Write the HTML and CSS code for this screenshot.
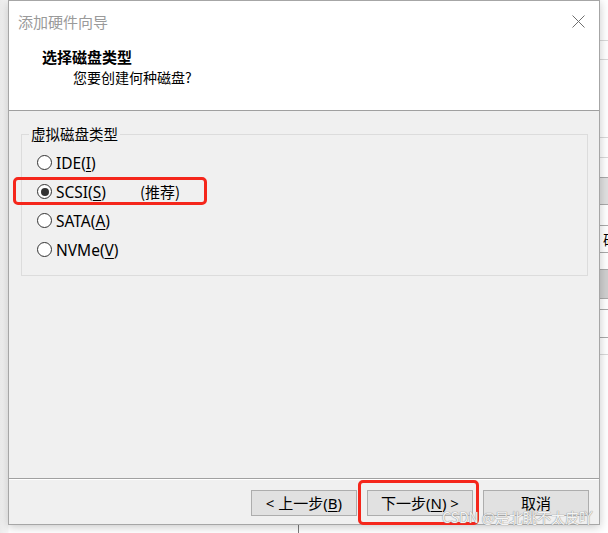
FILE: index.html
```html
<!DOCTYPE html>
<html lang="zh-CN">
<head>
<meta charset="utf-8">
<title>添加硬件向导</title>
<link rel="stylesheet" href="styles.css">
</head>
<body>
<div class="desk">
  <div class="bgwin">
    <div class="bl l1"></div>
    <div class="bl l2"></div>
    <div class="bl l3"></div>
    <div class="bl l4"></div>
    <div class="bb b1"></div>
    <div class="bl l5"></div>
    <div class="bchar">砳</div>
    <div class="bl l6"></div>
    <div class="bb b2"></div>
    <div class="bl l7"></div>
    <div class="bl l8"></div>
    <div class="bl l9"></div>
  </div>
  <div class="vline-top"></div>
  <div class="vline-bottom"></div>

  <div class="dialog">
    <div class="header">
      <div class="titlebar">
        <span class="title">添加硬件向导</span>
        <svg class="close" width="13" height="13" viewBox="0 0 13 13"><path d="M0.5 0.5L12.5 12.5M12.5 0.5L0.5 12.5" stroke="#6e6e6e" stroke-width="1" fill="none"/></svg>
      </div>
      <div class="heading">选择磁盘类型</div>
      <div class="subheading">您要创建何种磁盘?</div>
    </div>
    <div class="body">
      <fieldset class="group">
        <legend class="legend">虚拟磁盘类型</legend>
        <div class="options">
          <div class="opt"><span class="radio"></span><span class="name">IDE(<u>I</u>)</span></div>
          <div class="opt"><span class="radio checked"></span><span class="name">SCSI(<u>S</u>)</span><span class="rec">(推荐)</span></div>
          <div class="opt"><span class="radio"></span><span class="name">SATA(<u>A</u>)</span></div>
          <div class="opt"><span class="radio"></span><span class="name">NVMe(<u>V</u>)</span></div>
        </div>
      </fieldset>
    </div>
    <div class="footer">
      <button class="btn">&lt; 上一步(<u>B</u>)</button>
      <button class="btn">下一步(<u>N</u>) &gt;</button>
      <button class="btn">取消</button>
    </div>
    <div class="mark mark-scsi"></div>
    <div class="mark mark-next"></div>
    <div class="watermark">CSDN @是北眺不太皮吖</div>
  </div>
</div>
</body>
</html>
```

FILE: styles.css
```css
html, body {
  margin: 0;
  padding: 0;
  background: #ffffff;
  overflow: hidden;
}
body {
  width: 608px;
  height: 533px;
  font-family: "Segoe UI", "Noto Sans", "Noto Sans CJK SC", sans-serif;
}
.desk {
  position: relative;
  width: 608px;
  height: 533px;
  background: linear-gradient(to right, #ececec 0px, #f7f7f7 8px, #ffffff 9px);
}
.bgwin {
  position: absolute;
  left: 600px;
  top: 0;
  width: 8px;
  height: 533px;
  background: #ffffff;
}
.bl {
  position: absolute;
  left: 0;
  right: 0;
  height: 1px;
  background: #d9d9d9;
}
.l1 { top: 40px; }
.l2 { top: 59px; }
.l3 { top: 137px; }
.l4 { top: 157px; }
.l5 { top: 225px; background: #a9a9a9; }
.l6 { top: 252px; background: #a9a9a9; }
.l7 { top: 309px; background: #a9a9a9; }
.l8 { top: 337px; background: #a9a9a9; }
.l9 { top: 354px; }
.bb {
  position: absolute;
  left: 0;
  right: 0;
  background: #e0e0e0;
  border-top: 1px solid #a9a9a9;
  border-bottom: 1px solid #a9a9a9;
}
.b1 { top: 177px; height: 26px; }
.b2 { top: 269px; height: 28px; background: #cfcfcf; }
.bchar {
  position: absolute;
  left: 3px;
  top: 229px;
  font-family: "Noto Sans CJK SC", sans-serif;
  font-size: 14px;
  line-height: 20px;
  color: #000;
}
.vline-top {
  position: absolute;
  left: 317px;
  top: 0;
  width: 1px;
  height: 3px;
  background: #a0a0a0;
}
.vline-bottom {
  position: absolute;
  left: 298px;
  top: 525px;
  width: 1px;
  height: 8px;
  background: #7a7a7a;
}

.dialog {
  position: absolute;
  left: 8px;
  top: 0;
  width: 590px;
  height: 523px;
  border: 1px solid #a6a6a6;
  background: #f0f0f0;
  display: flex;
  flex-direction: column;
  box-shadow: 0 2px 9px rgba(0, 0, 0, 0.22);
}
.header {
  height: 109px;
  background: #ffffff;
  border-bottom: 1px solid #a0a0a0;
  flex: none;
}
.titlebar {
  height: 40px;
  display: flex;
  align-items: center;
  justify-content: space-between;
  padding: 0 14px 0 9px;
}
.title {
  font-family: "Noto Sans CJK SC", sans-serif;
  font-size: 15px;
  color: #9a9a9a;
}
.close {
  display: block;
}
.heading {
  margin-top: 6px;
  padding-left: 33px;
  font-family: "Noto Sans CJK SC", sans-serif;
  font-weight: 700;
  font-size: 15px;
  line-height: 20px;
  color: #000;
}
.subheading {
  padding-left: 64px;
  font-family: "Noto Sans CJK SC", sans-serif;
  font-size: 14px;
  line-height: 21px;
  color: #000;
}
.body {
  flex: 1;
  padding: 13px 11px 0 12px;
  border-bottom: 1px solid #a0a0a0;
}
.group {
  margin: 0;
  padding: 4px 0 11px 0;
  border: 1px solid #dcdcdc;
  min-width: 0;
}
.legend {
  margin-left: 7px;
  padding: 0 2px;
  font-family: "Noto Sans CJK SC", sans-serif;
  font-size: 14.5px;
  line-height: 20px;
  color: #000;
}
.options {
  display: flex;
  flex-direction: column;
  padding-left: 15px;
}
.opt {
  height: 29px;
  display: flex;
  align-items: center;
  font-family: "Segoe UI", "Noto Sans", "Noto Sans CJK SC", sans-serif;
  font-size: 15.5px;
  color: #000;
}
.opt u {
  text-underline-offset: 2px;
}
.radio {
  width: 13px;
  height: 13px;
  border: 1px solid #333333;
  border-radius: 50%;
  background: #ffffff;
  margin-right: 4px;
  position: relative;
  flex: none;
}
.radio.checked::after {
  content: "";
  position: absolute;
  left: 2.5px;
  top: 2.5px;
  width: 8px;
  height: 8px;
  border-radius: 50%;
  background: #333333;
}
.name {
  display: inline-block;
  min-width: 84px;
}
.rec {
  font-family: "Noto Sans CJK SC", sans-serif;
  font-size: 15px;
}
.footer {
  flex: none;
  height: 45px;
  border-top: 1px solid #ffffff;
  display: flex;
  justify-content: flex-end;
  align-items: flex-start;
  gap: 10px;
  padding: 10px 10px 0 0;
  box-sizing: border-box;
}
.btn {
  width: 106px;
  height: 26px;
  margin: 0;
  padding: 0;
  border: 1px solid #adadad;
  background: #e1e1e1;
  font-family: "Segoe UI", "Noto Sans", "Noto Sans CJK SC", sans-serif;
  font-size: 15px;
  color: #000;
  line-height: 22px;
}
.btn u {
  text-underline-offset: 2px;
}
.mark {
  position: absolute;
  border: 3px solid #f5261b;
  border-radius: 5px;
  box-sizing: border-box;
}
.mark-scsi {
  left: 4px;
  top: 176px;
  width: 194px;
  height: 28px;
}
.mark-next {
  left: 349px;
  top: 479px;
  width: 121px;
  height: 45px;
}
.watermark {
  position: absolute;
  left: 433px;
  top: 506px;
  font-family: "Noto Sans CJK SC", sans-serif;
  font-size: 14px;
  line-height: 20px;
  color: #f4f4f4;
  text-shadow: 0 0 1px #8a8a8a, 0 0 1px #9a9a9a;
  white-space: nowrap;
}
```
